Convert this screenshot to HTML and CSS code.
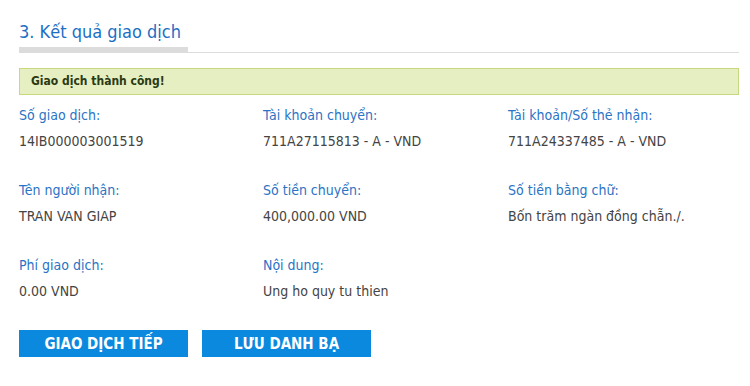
FILE: index.html
```html
<!DOCTYPE html>
<html lang="vi">
<head>
    <meta charset="UTF-8">
    <meta name="viewport" content="width=device-width, initial-scale=1.0">
    <title>Kết quả giao dịch</title>
    <link rel="stylesheet" href="styles.css">
</head>
<body>
    <div class="container">
        <div class="section-head">
            <h2>3. Kết quả giao dịch</h2>
        </div>

        <div class="alert-success">Giao dịch thành công!</div>

        <div class="result-grid">
            <div class="field">
                <label>Số giao dịch:</label>
                <span>14IB000003001519</span>
            </div>
            <div class="field">
                <label>Tài khoản chuyển:</label>
                <span>711A27115813 - A - VND</span>
            </div>
            <div class="field">
                <label>Tài khoản/Số thẻ nhận:</label>
                <span>711A24337485 - A - VND</span>
            </div>

            <div class="field">
                <label>Tên người nhận:</label>
                <span>TRAN VAN GIAP</span>
            </div>
            <div class="field">
                <label>Số tiền chuyển:</label>
                <span>400,000.00 VND</span>
            </div>
            <div class="field">
                <label>Số tiền bằng chữ:</label>
                <span>Bốn trăm ngàn đồng chẵn./.</span>
            </div>

            <div class="field">
                <label>Phí giao dịch:</label>
                <span>0.00 VND</span>
            </div>
            <div class="field">
                <label>Nội dung:</label>
                <span>Ung ho quy tu thien</span>
            </div>
        </div>

        <div class="actions">
            <button type="button">Giao dịch tiếp</button>
            <button type="button">Lưu danh bạ</button>
        </div>
    </div>
</body>
</html>
```

FILE: styles.css
```css
* {
    margin: 0;
    padding: 0;
    box-sizing: border-box;
    font-family: Tahoma, "DejaVu Sans Condensed", "DejaVu Sans", sans-serif;
}

body {
    background: #fff;
    color: #333;
}

.container {
    padding: 22px 11px 0 19px;
}

.section-head {
    border-bottom: 1px solid #dcdcdc;
}

h2 {
    display: inline-block;
    width: 169px;
    font-size: 18px;
    line-height: 20px;
    font-weight: normal;
    color: #1c6fc4;
    padding-bottom: 5px;
    border-bottom: 5px solid #dcdcdc;
    white-space: nowrap;
    vertical-align: bottom;
}

.alert-success {
    margin-top: 15px;
    height: 27px;
    line-height: 25px;
    padding-left: 11px;
    background: #e6efc2;
    border: 1px solid #c6d880;
    color: #2b3a12;
    font-size: 12px;
    font-weight: bold;
}

.result-grid {
    display: grid;
    grid-template-columns: 244px 245px 1fr;
    row-gap: 33px;
    margin-top: 12px;
}

.field label {
    display: block;
    color: #2a73c5;
    font-size: 14px;
    line-height: 16px;
    margin-bottom: 10px;
}

.field span {
    display: block;
    color: #444;
    font-size: 14px;
    line-height: 16px;
}

.actions {
    display: flex;
    gap: 14px;
    margin-top: 31px;
}

button {
    width: 169px;
    height: 27px;
    background: #0b89de;
    color: #fff;
    border: none;
    font-size: 15px;
    font-weight: bold;
    text-transform: uppercase;
    cursor: pointer;
}
```
